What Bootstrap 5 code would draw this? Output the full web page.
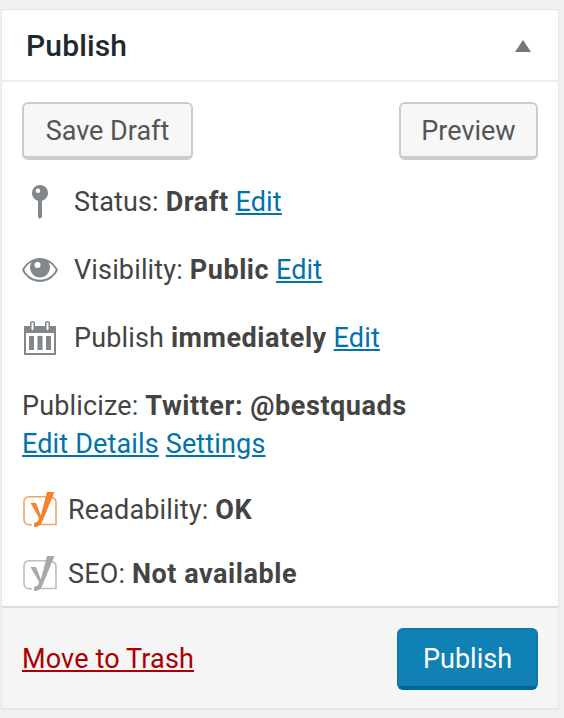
<!DOCTYPE html>
<html lang="en">
<head>
    <meta charset="UTF-8">
    <meta name="viewport" content="width=device-width, initial-scale=1.0">
    <title>Publish</title>
    <link href="https://cdn.jsdelivr.net/npm/bootstrap@5.3.0/dist/css/bootstrap.min.css" rel="stylesheet">
    <style>
        body { background: #f1f1f1; font-family: Roboto, "Liberation Sans", sans-serif; font-size: 27px; letter-spacing: .15px; color: #444; padding: 9px 5px 9px 1px; }
        a { color: #0073aa; }
        b { letter-spacing: .55px; }
        .pub-box { background: #fff; border: 1px solid #e5e5e5; border-radius: 0; height: 700px; box-shadow: 0 1px 1px rgba(0,0,0,.04); }
        .pub-head { height: 72px; padding: 2px 27px 0 24px; border-bottom: 2px solid #eee; background: #fff; flex: none; }
        .pub-head h2 { font-size: 30px; font-weight: 500; color: #23282d; margin: 0; font-family: inherit; }
        .pub-arrow { width: 0; height: 0; border-left: 8px solid transparent; border-right: 8px solid transparent; border-bottom: 12px solid #72777c; }
        .pub-body { padding: 20px 20px 0 20px; }
        .wp-btn { height: 58px; padding: 2px 0 0; font-size: 27px; line-height: 1; color: #555; background: #f7f7f7; border: 2px solid #ccc; border-bottom-width: 4px; border-radius: 6px; }
        .btn-draft { width: 171px; }
        .btn-preview { width: 139px; }
        .misc-row { height: 68px; }
        .misc-row svg { flex: none; }
        .ico-slot { width: 52px; flex: none; }
        .pin-ico { margin-left: 9px; }
        .cal-ico { margin-left: 2px; }
        .seo-slot { width: 46px; flex: none; }
        .pub-lines { line-height: 38px; margin-top: 15px; }
        .seo-row { height: 64px; }
        .seo-first { margin-top: 15px; }
        .pub-foot { background: #f5f5f5; border-top: 2px solid #ddd; border-radius: 0; padding: 2px 20px 0 20px; height: 102px; flex: none; }
        .trash-link { color: #a00; }
        .btn-publish { width: 141px; height: 62px; padding: 2px 0 0; font-size: 27px; line-height: 1; color: #fff; background: #0f81b5; border: 2px solid #0f78aa; border-bottom: 4px solid #006799; border-radius: 6px; }
    </style>
</head>
<body>
    <div class="card pub-box">
        <!-- Header -->
        <div class="pub-head d-flex justify-content-between align-items-center">
            <h2>Publish</h2>
            <span class="pub-arrow"></span>
        </div>

        <div class="pub-body flex-grow-1">
            <!-- Draft and preview -->
            <div class="d-flex justify-content-between mb-2">
                <button type="button" class="btn wp-btn btn-draft">Save Draft</button>
                <button type="button" class="btn wp-btn btn-preview">Preview</button>
            </div>

            <div class="misc-row d-flex align-items-center">
                <span class="ico-slot d-flex">
                    <svg class="pin-ico" width="18" height="34" viewBox="0 0 18 34"><path fill="#82878c" fill-rule="evenodd" d="M9 0a8 8 0 0 1 8 8c0 3.800-2.500 6.800-6 7.700V32l-2.500 2L7 32V15.700C3.500 14.800 1 11.800 1 8a8 8 0 0 1 8-8zM7 3.500a2.300 2.300 0 1 0 0 4.600 2.300 2.300 0 0 0 0-4.600z"/></svg>
                </span>
                <span>Status: <b>Draft</b> <a href="#">Edit</a></span>
            </div>
            <div class="misc-row d-flex align-items-center">
                <span class="ico-slot d-flex">
                    <svg width="36" height="24" viewBox="0 0 36 24"><path fill="#82878c" fill-rule="evenodd" d="M18 0c8 0 14.500 5 18 12-3.500 7-10 12-18 12S3.500 19 0 12C3.500 5 10 0 18 0zM9.500 4.300C6.400 6 3.800 8.700 2.200 12 5.300 17.800 11 21.800 18 21.800S30.700 17.800 33.800 12c-1.600-3.300-4.200-6-7.300-7.700a10 10 0 1 1-17 0zM15.500 4a3 3 0 1 0 0 6 3 3 0 0 0 0-6z"/></svg>
                </span>
                <span>Visibility: <b>Public</b> <a href="#">Edit</a></span>
            </div>
            <div class="misc-row d-flex align-items-center">
                <span class="ico-slot d-flex">
                    <svg class="cal-ico" width="32" height="34" viewBox="0 0 32 34"><path fill="#82878c" fill-rule="evenodd" d="M0 5h6V2.500a2.500 2.500 0 0 1 5 0V5h10V2.500a2.500 2.500 0 0 1 5 0V5h6v29H0zM7.500 2.500V8a1 1 0 0 0 2 0V2.500a1 1 0 0 0-2 0zM22.500 2.500V8a1 1 0 0 0 2 0V2.500a1 1 0 0 0-2 0zM2 12v20h28V12zM5 15h5v14H5zM13.500 15h5v14h-5zM22 15h5v14h-5z"/></svg>
                </span>
                <span>Publish <b>immediately</b> <a href="#">Edit</a></span>
            </div>

            <div class="pub-lines">
                <div>Publicize: <b>Twitter: @bestquads</b></div>
                <div><a href="#">Edit Details</a> <a href="#">Settings</a></div>
            </div>

            <div class="seo-row seo-first d-flex align-items-center">
                <span class="seo-slot d-flex">
                    <svg width="36" height="36" viewBox="0 0 36 36"><path fill="none" stroke="#f3a368" stroke-width="1.600" d="M24 4.700H7a5 5 0 0 0-5 5v18a5 5 0 0 0 5 5h3M30 5.500q4 1 4 5v22H18"/><path fill="#f5812a" d="M25 0h7.500L20.500 29q-2 6-8.500 6v-4q4-.5 5-4q0-1-1-3L8.500 11h5.500l4.800 12.500z"/></svg>
                </span>
                <span>Readability: <b>OK</b></span>
            </div>
            <div class="seo-row d-flex align-items-center">
                <span class="seo-slot d-flex">
                    <svg width="36" height="36" viewBox="0 0 36 36"><path fill="none" stroke="#bdbdbd" stroke-width="1.600" d="M24 4.700H7a5 5 0 0 0-5 5v18a5 5 0 0 0 5 5h3M30 5.500q4 1 4 5v22H18"/><path fill="#a8a8a8" d="M25 0h7.500L20.500 29q-2 6-8.500 6v-4q4-.5 5-4q0-1-1-3L8.500 11h5.500l4.800 12.500z"/></svg>
                </span>
                <span>SEO: <b>Not available</b></span>
            </div>
        </div>

        <!-- Footer -->
        <div class="pub-foot d-flex justify-content-between align-items-center">
            <a href="#" class="trash-link">Move to Trash</a>
            <button type="button" class="btn btn-publish">Publish</button>
        </div>
    </div>

    <script src="https://cdn.jsdelivr.net/npm/bootstrap@5.3.0/dist/js/bootstrap.bundle.min.js"></script>
</body>
</html>
